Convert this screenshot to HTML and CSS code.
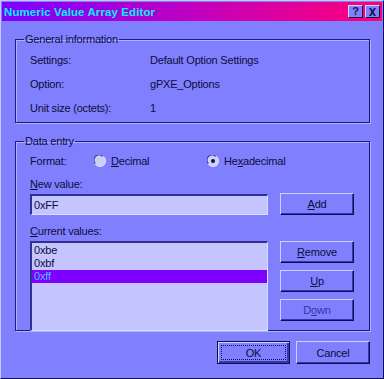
FILE: index.html
```html
<!DOCTYPE html>
<html>
<head>
<meta charset="utf-8">
<link rel="stylesheet" href="styles.css">
</head>
<body>
<div class="window">
  <div class="titlebar">
    <span class="title">Numeric Value Array Editor</span>
    <div class="tbtns">
      <span class="tbtn">?</span>
      <span class="tbtn tclose">
        <svg width="9" height="8" viewBox="0 0 9 8"><path d="M1 0h2l1.5 2.5L6 0h2L5.5 4 8 8H6L4.5 5.5 3 8H1l2.5-4z" fill="#10104a"/></svg>
      </span>
    </div>
  </div>
  <div class="content">
    <fieldset class="group general">
      <legend>General information</legend>
      <div class="inforow"><span class="lbl">Settings:</span><span>Default Option Settings</span></div>
      <div class="inforow"><span class="lbl">Option:</span><span>gPXE_Options</span></div>
      <div class="inforow"><span class="lbl">Unit size (octets):</span><span>1</span></div>
    </fieldset>
    <fieldset class="group data">
      <legend>Data entry</legend>
      <div class="formatrow">
        <span class="fmtlbl">Format:</span>
        <span class="radio r1">
          <svg width="12" height="12" viewBox="0 0 12 12"><circle cx="6" cy="6" r="5.5" fill="#cfcff4"/><circle cx="6" cy="6" r="5.4" fill="none" stroke="#dcdcff" stroke-width="1.2"/><path d="M1.4 8.6A5 5 0 0 1 8.6 1.4" stroke="#4a4aa8" stroke-width="1.4" fill="none"/></svg>
          <span><u>D</u>ecimal</span>
        </span>
        <span class="radio r2">
          <svg width="12" height="12" viewBox="0 0 12 12"><circle cx="6" cy="6" r="5.5" fill="#cfcff4"/><circle cx="6" cy="6" r="5.4" fill="none" stroke="#dcdcff" stroke-width="1.2"/><path d="M1.4 8.6A5 5 0 0 1 8.6 1.4" stroke="#4a4aa8" stroke-width="1.4" fill="none"/><circle cx="6" cy="6" r="2" fill="#10104a"/></svg>
          <span>He<u>x</u>adecimal</span>
        </span>
      </div>
      <div class="grid">
        <div class="lbl2 newlbl"><u>N</u>ew value:</div>
        <div class="input">0xFF</div>
        <div class="btn addbtn"><span><u>A</u>dd</span></div>
        <div class="lbl2 curlbl"><u>C</u>urrent values:</div>
        <div class="listbox">
          <div class="item">0xbe</div>
          <div class="item">0xbf</div>
          <div class="item sel">0xff</div>
        </div>
        <div class="sidebtns">
          <div class="btn"><span><u>R</u>emove</span></div>
          <div class="btn"><span><u>U</u>p</span></div>
          <div class="btn dim"><span>D<u>o</u>wn</span></div>
        </div>
      </div>
    </fieldset>
    <div class="footer">
      <div class="btn okbtn"><span class="focus">OK</span></div>
      <div class="btn cancel"><span>Cancel</span></div>
    </div>
  </div>
</div>
</body>
</html>
```
FILE: styles.css
```css
html, body {
  margin: 0;
  padding: 0;
  background: #8080ff;
}
body {
  font-family: "Liberation Sans", Arial, sans-serif;
  font-size: 11px;
  letter-spacing: -0.2px;
  color: #0c0c3a;
}
.window {
  width: 384px;
  height: 379px;
  box-sizing: border-box;
  background: #8080ff;
  border-top: 1px solid #c8c8ff;
  border-left: 1px solid #c8c8ff;
  border-right: 1px solid #101050;
  border-bottom: 1px solid #101050;
  padding: 1px;
}
.titlebar {
  height: 19px;
  background: linear-gradient(to right, #7c00ff, #c000c0 50%, #ff0078);
  display: flex;
  align-items: center;
  justify-content: space-between;
  padding-left: 2px;
}
.title {
  color: #00f0ff;
  font-weight: bold;
  font-size: 11.5px;
  letter-spacing: 0.1px;
}
.tbtns {
  display: flex;
  gap: 2px;
  margin-right: 2px;
}
.tbtn {
  width: 15px;
  height: 13px;
  box-sizing: border-box;
  background: #8080ff;
  border-top: 1px solid #d8d8ff;
  border-left: 1px solid #d8d8ff;
  border-right: 1px solid #101050;
  border-bottom: 1px solid #101050;
  display: flex;
  align-items: center;
  justify-content: center;
  font-weight: bold;
  font-size: 11px;
  letter-spacing: 0;
  color: #10104a;
  line-height: 1;
}
.content {
  padding: 0 12px 0 13px;
}
.group {
  margin: 0;
  padding: 0 14px;
  border: 1px solid #1c1c7c;
  box-shadow: 1px 1px 0 #b0b0ff, inset 1px 1px 0 #b0b0ff;
  min-width: 0;
}
.group legend {
  padding: 0 1px;
  margin-left: -6px;
  line-height: 13px;
  height: 13px;
}
.general {
  margin-top: 12px;
  padding-top: 2px;
  padding-bottom: 2px;
}
.inforow {
  display: flex;
  height: 24px;
  align-items: center;
}
.inforow .lbl {
  width: 120px;
}
.data {
  margin-top: 12px;
  padding-bottom: 0;
}
.formatrow {
  display: flex;
  align-items: center;
  height: 20px;
  margin-top: 3px;
}
.fmtlbl {
  width: 64px;
}
.radio {
  display: flex;
  align-items: center;
  gap: 5px;
}
.r1 {
  width: 113px;
}
.grid {
  display: grid;
  grid-template-columns: 238px 74px;
  column-gap: 12px;
  grid-template-rows: auto auto auto auto;
}
.lbl2 {
  line-height: 14px;
  grid-column: 1;
}
.newlbl {
  margin-top: 6px;
}
.input {
  grid-column: 1;
  grid-row: 2;
  margin-top: 3px;
  height: 21px;
  box-sizing: border-box;
  background: #c4c4ff;
  border-top: 2px solid #303090;
  border-left: 2px solid #303090;
  border-right: 1px solid #dcdcff;
  border-bottom: 1px solid #dcdcff;
  padding-left: 2px;
  display: flex;
  align-items: center;
}
.addbtn {
  grid-column: 2;
  grid-row: 2;
  margin-top: 2px;
  height: 22px;
}
.curlbl {
  grid-row: 3;
  margin-top: 9px;
}
.listbox {
  grid-column: 1;
  grid-row: 4;
  margin-top: 3px;
  height: 90px;
  margin-bottom: -1px;
  box-sizing: border-box;
  background: #c4c4ff;
  border-top: 2px solid #303090;
  border-left: 2px solid #303090;
  border-right: 1px solid #dcdcff;
  border-bottom: 1px solid #dcdcff;
  padding-top: 1px;
}
.item {
  height: 13px;
  line-height: 13px;
  padding-left: 2px;
}
.item.sel {
  background: #8000ff;
  color: #40c0ff;
}
.sidebtns {
  grid-column: 2;
  grid-row: 4;
  margin-top: 3px;
  display: flex;
  flex-direction: column;
  gap: 7px;
}
.btn {
  box-sizing: border-box;
  height: 22px;
  background: #8080ff;
  border-top: 1px solid #d0d0ff;
  border-left: 1px solid #d0d0ff;
  border-right: 1px solid #0c0c50;
  border-bottom: 1px solid #0c0c50;
  box-shadow: inset -1px -1px 0 #3838a8;
  display: flex;
  align-items: center;
  justify-content: center;
}
.btn.dim {
  color: #3434a8;
}
.footer {
  display: flex;
  justify-content: flex-end;
  gap: 6px;
  margin-top: 10px;
}
.okbtn {
  width: 73px;
  height: 23px;
  border: 1px solid #0c0c50;
  box-shadow: inset 1px 1px 0 #d0d0ff, inset -2px -2px 0 #3838a8;
  padding: 3px;
}
.okbtn .focus {
  flex: 1;
  align-self: stretch;
  border: 1px dotted #0c0c50;
  display: flex;
  align-items: center;
  justify-content: center;
}
.cancel {
  width: 74px;
  height: 23px;
}
```
